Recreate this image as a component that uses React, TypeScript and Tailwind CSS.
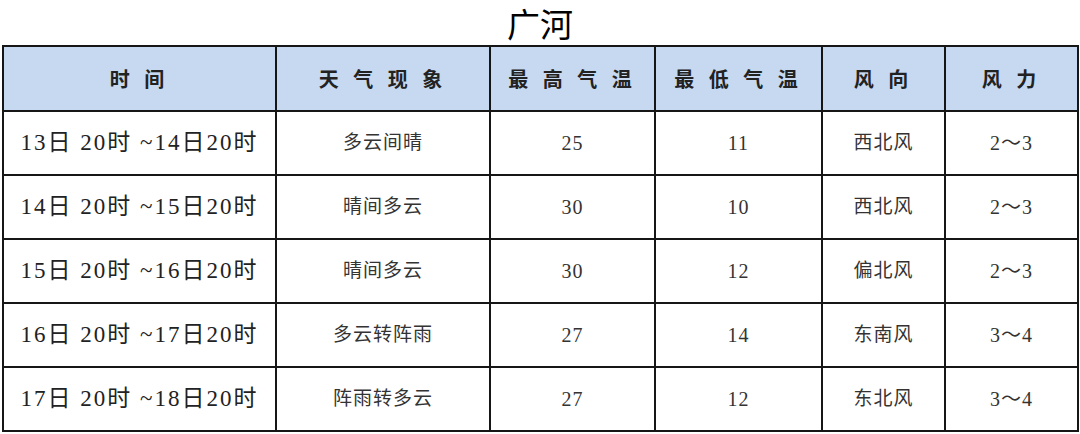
const headers = ["时 间", "天 气 现 象", "最 高 气 温", "最 低 气 温", "风 向", "风 力"];

const rows = [
  ["13日 20时 ~14日20时", "多云间晴", "25", "11", "西北风", "2～3"],
  ["14日 20时 ~15日20时", "晴间多云", "30", "10", "西北风", "2～3"],
  ["15日 20时 ~16日20时", "晴间多云", "30", "12", "偏北风", "2～3"],
  ["16日 20时 ~17日20时", "多云转阵雨", "27", "14", "东南风", "3～4"],
  ["17日 20时 ~18日20时", "阵雨转多云", "27", "12", "东北风", "3～4"],
];

const widths = ["w-[273px]", "w-[214px]", "w-[165px]", "w-[167px]", "w-[123px]", "w-[133px]"];

export default function App() {
  return (
    <div className="w-[1080px] h-[434px] bg-white overflow-hidden font-['Liberation_Serif','Noto_Sans_CJK_SC',serif]">
      <h1 className="h-[45px] flex items-center justify-center text-[33px] leading-none text-black font-['Noto_Sans_CJK_SC',sans-serif] pt-[1px]">
        广河
      </h1>
      <table className="ml-[2px] w-[1075px] border-collapse table-fixed">
        <thead>
          <tr className="h-[65px] bg-[#c6d9f0]">
            {headers.map((h, i) => (
              <th
                key={i}
                className={`${widths[i]} border-2 border-[#161616] text-[20px] font-bold text-[#222] tracking-[5px] font-['Noto_Sans_CJK_SC',sans-serif]`}
              >
                {h}
              </th>
            ))}
          </tr>
        </thead>
        <tbody>
          {rows.map((r, ri) => (
            <tr key={ri} className="h-[64px]">
              {r.map((c, ci) => (
                <td
                  key={ci}
                  className={
                    ci === 0
                      ? "border-2 border-[#161616] text-center text-[23px] tracking-[2px] text-[#222]"
                      : ci === 2 || ci === 3 || ci === 5
                        ? "border-2 border-[#161616] text-center text-[20px] tracking-[1px] text-[#333]"
                        : "border-2 border-[#161616] text-center text-[19px] tracking-[1px] text-[#333]"
                  }
                >
                  {c}
                </td>
              ))}
            </tr>
          ))}
        </tbody>
      </table>
    </div>
  );
}
